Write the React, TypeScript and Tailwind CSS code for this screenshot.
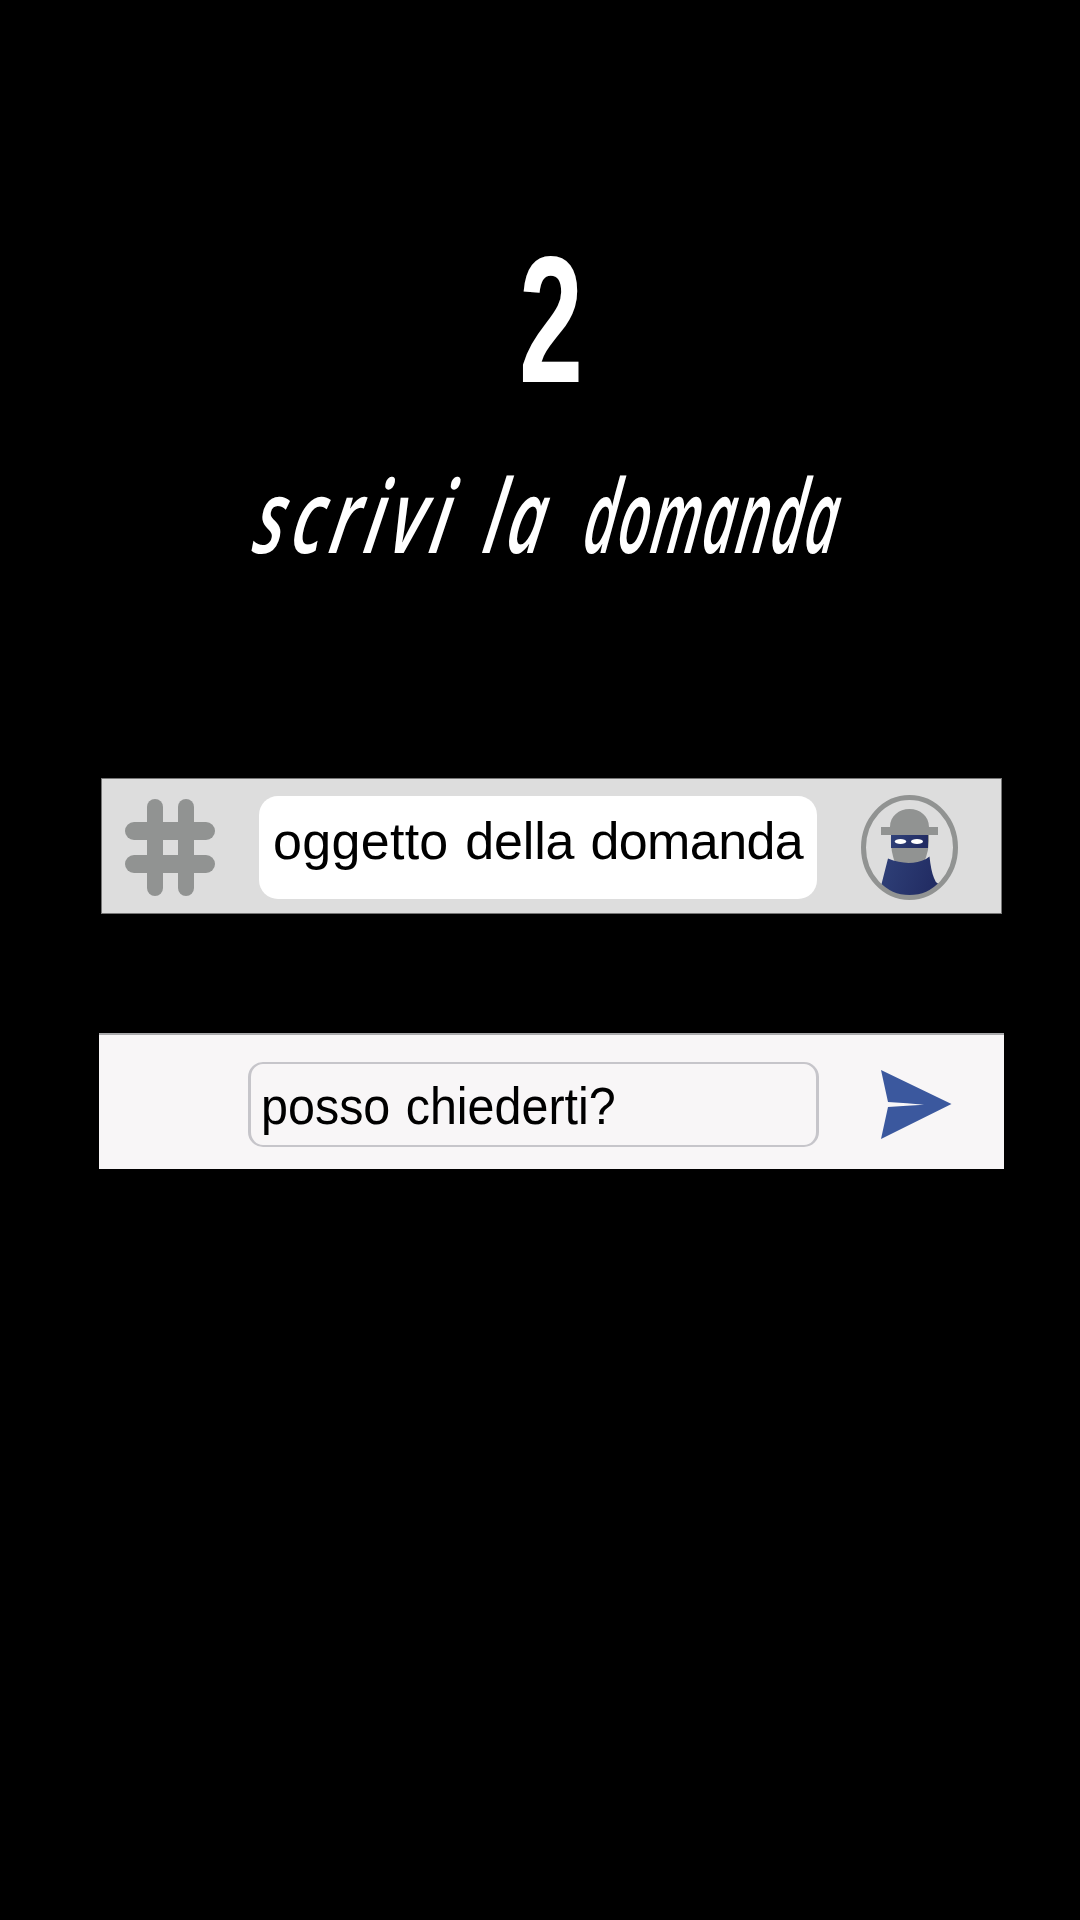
const words = [
  { text: "scrivi", className: "w-[230px]", inner: "scale-x-[0.67] tracking-[10px]" },
  { text: "la", className: "w-[100px]", inner: "scale-x-[0.64] tracking-[8px]" },
  { text: "domanda", className: "w-[270px]", inner: "scale-x-[0.545] tracking-[3px]" },
];

function HashIcon() {
  return (
    <svg width="91" height="98" viewBox="0 0 91 98" fill="#919392">
      <rect x="22" y="0" width="16" height="97" rx="8" />
      <rect x="53" y="0" width="16" height="97" rx="8" />
      <rect x="0" y="23" width="90" height="18" rx="9" />
      <rect x="0" y="56" width="90" height="18" rx="9" />
    </svg>
  );
}

function SpyIcon() {
  return (
    <svg width="97" height="106" viewBox="0 0 97 106">
      <defs>
        <linearGradient id="cloak" x1="0" x2="1" y1="0" y2="0.2">
          <stop offset="0" stopColor="#30427a" />
          <stop offset="1" stopColor="#212b62" />
        </linearGradient>
        <clipPath id="disc">
          <ellipse cx="48.5" cy="52.5" rx="46" ry="50" />
        </clipPath>
      </defs>
      <path d="M30 38H68Q69 55 62 70H35Q29 57 30 38Z" fill="#919392" />
      <path d="M20 32H29C29 21 38 14 48.500 14S68 21 68 32H77V40H20Z" fill="#919392" />
      <rect x="30" y="40" width="37" height="13" fill="url(#cloak)" />
      <ellipse cx="39.500" cy="46.500" rx="5.700" ry="2.600" fill="#fff" />
      <ellipse cx="56" cy="46.500" rx="6" ry="2.600" fill="#fff" />
      <path d="M27 63.500Q48 72 65 64L68.500 61.500Q70 76 73 83Q74 87 77.500 89L82 106H15L20 91Z" fill="url(#cloak)" clipPath="url(#disc)" />
      <ellipse cx="48.500" cy="52.500" rx="46" ry="50" fill="none" stroke="#919392" strokeWidth="5" />
    </svg>
  );
}

function SendIcon() {
  return (
    <svg width="71" height="70" viewBox="0 0 71 70" fill="#3b589e">
      <path d="M0 0L70.500 34L0 69L7 37L26 35.800L43 34.800L26 33.200L7 32Z" />
    </svg>
  );
}

export default function App() {
  return (
    <main className="flex h-[1920px] w-[1080px] flex-col overflow-hidden bg-black font-['Liberation_Sans',sans-serif]">
      <h1 className="mt-[230px] ml-[519px] h-[180px] w-[100px] origin-left scale-x-[0.64] text-[180px] leading-[180px] font-bold text-white">
        2
      </h1>
      <p className="mt-[44px] ml-[251px] flex h-[120px] font-['Open_Sans',sans-serif] text-[102px] leading-[120px] font-semibold italic text-white">
        {words.map((word) => (
          <span key={word.text} className={word.className}>
            <span className={`inline-block origin-[0_80%] -skew-x-[16deg] ${word.inner}`}>{word.text}</span>
          </span>
        ))}
      </p>
      <section className="mt-[204px] ml-[101px] flex h-[136px] w-[901px] items-start border border-[#777] bg-[#dddddd]">
        <div className="mt-[20px] ml-[23px] w-[134px]">
          <HashIcon />
        </div>
        <div className="mt-[17px] h-[103px] w-[558px] rounded-[19px] bg-white pl-[14px] text-[52px] leading-[90px] whitespace-nowrap text-black [word-spacing:2px]">
          <span className="tracking-[0.3px]">oggetto </span>
          <span className="tracking-[-0.2px]">della </span>
          <span className="tracking-[-0.6px]">domanda</span>
        </div>
        <div className="mt-[16px] ml-[44px]">
          <SpyIcon />
        </div>
      </section>
      <section className="mt-[119px] ml-[99px] flex h-[136px] w-[905px] items-start border-t-2 border-[#aaaaac] bg-[#f8f6f7]">
        <div className="mt-[27px] ml-[149px] h-[85px] w-[571px] rounded-[15px] border-x-[3px] border-y-2 border-[#c6c5ca] pl-[10px] text-[52px] leading-[84px] whitespace-nowrap text-black">
          <span className="inline-block origin-left scale-x-[0.932] [word-spacing:2px]">posso chiederti?</span>
        </div>
        <div className="mt-[35px] ml-[62px]">
          <SendIcon />
        </div>
      </section>
    </main>
  );
}
